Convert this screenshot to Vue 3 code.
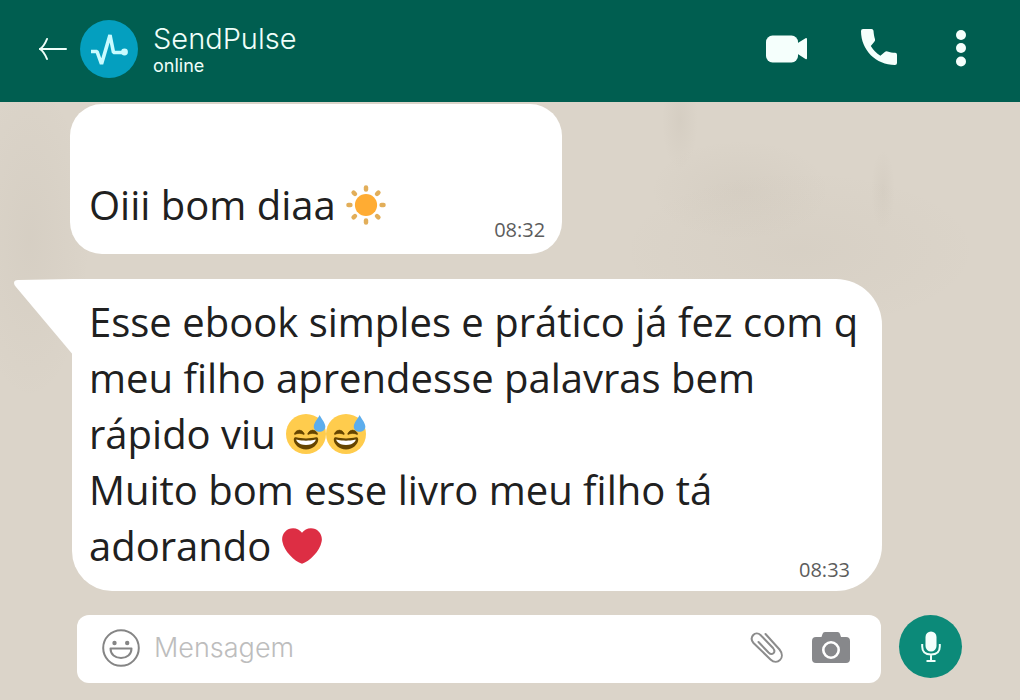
<script setup>
import { ref } from 'vue'

const draft = ref('')
const rays = [0, 45, 90, 135, 180, 225, 270, 315]
</script>

<template>
  <div class="chat">
    <header class="bar">
      <button class="icon-btn back" type="button" aria-label="Voltar">
        <svg width="28" height="24" viewBox="0 0 28 24" fill="none" stroke="#effffa" stroke-width="2" stroke-linecap="round">
          <path d="M27 12H1" /><path d="M8 2C6 7 4 10 1 12C4 14 6 17 8 22" />
        </svg>
      </button>
      <svg class="avatar" width="58" height="58" viewBox="0 0 58 58" aria-hidden="true">
        <circle cx="29" cy="29" r="29" fill="#049fbf" />
        <path d="M11 31.500H17L21.500 44L30 15L33.500 32.500H43" fill="none" stroke="#c9fbff" stroke-width="3.600" stroke-linejoin="bevel" />
        <circle cx="44.500" cy="32" r="3.400" fill="#c9fbff" />
      </svg>
      <div class="who">
        <h1>SendPulse</h1>
        <p>online</p>
      </div>
      <nav class="actions">
        <button class="icon-btn" type="button" aria-label="Chamada de vídeo">
          <svg width="42" height="28" viewBox="0 0 42 28" fill="#f5fffc">
            <rect x="0" y="0.500" width="32" height="27" rx="6.500" />
            <path d="M31 8.500L39.500 3.300Q41 2.500 41 4.500V23Q41 25 39.500 24L31 18.500Z" />
          </svg>
        </button>
        <button class="icon-btn" type="button" aria-label="Chamada de voz">
          <svg width="36" height="40" viewBox="0 0 36 40" fill="#f5fffc">
            <path d="M2 0H10.500Q12.300 0 12.500 1.800C12.700 5 13.200 7.500 14 10.200Q14.400 11.600 13.300 12.700L9.800 17C12.500 21.500 15.300 24.200 19.400 26.700L23.800 23Q25 22 26.500 22.500C29 23.300 31.300 23.700 34.200 23.800Q36 23.900 36 25.700V34Q36 36 34 36C15 36 0 21 0 2Q0 0 2 0Z" />
          </svg>
        </button>
        <button class="icon-btn more" type="button" aria-label="Mais opções">
          <svg width="10" height="38" viewBox="0 0 10 38" fill="#f5fffc">
            <circle cx="5" cy="5" r="5" /><circle cx="5" cy="18" r="5" /><circle cx="5" cy="31.500" r="5" />
          </svg>
        </button>
      </nav>
    </header>

    <main class="thread">
      <article class="bubble first">
        <p class="text">
          Oiii bom diaa
          <svg class="emoji" viewBox="0 0 36 36" role="img" aria-label="sol">
            <g stroke="#e2ae59" stroke-width="4" stroke-linecap="round">
              <path v-for="r in rays" :key="r" d="M18 2.200V4" :transform="`rotate(${r} 18 18)`" />
            </g>
            <circle cx="18" cy="18" r="10" fill="#ffac33" />
          </svg>
        </p>
        <time>08:32</time>
      </article>

      <article class="bubble second">
        <svg class="tail" width="60" height="78" viewBox="0 0 60 78" aria-hidden="true">
          <path d="M60 0L4 1Q0 1 0 4Q0 6 2 8L60 77Z" fill="#fff" />
        </svg>
        <div class="text">
          <p>
            Esse ebook simples e prático já fez com q meu filho aprendesse palavras bem rápido viu
            <span class="pair"><svg v-for="n in 2" :key="n" class="emoji" viewBox="0 0 36 36" role="img" aria-label="sorriso com suor">
              <circle cx="18" cy="18" r="18" fill="#ffcc4d" />
              <g fill="#664500">
                <path d="M28.457 17.797c-.06-.135-1.499-3.297-4.457-3.297-2.957 0-4.397 3.162-4.457 3.297-.092.207-.032.449.145.591.175.142.426.147.61.014.012-.009 1.262-.902 3.702-.902 2.426 0 3.674.881 3.702.901.088.066.194.099.298.099.11 0 .221-.037.312-.109.177-.142.238-.386.145-.594zm-12 0c-.06-.135-1.499-3.297-4.457-3.297-2.957 0-4.397 3.162-4.457 3.297-.092.207-.032.449.144.591.176.142.427.147.61.014.013-.009 1.262-.902 3.703-.902 2.426 0 3.674.881 3.702.901.088.066.194.099.298.099.11 0 .221-.037.312-.109.178-.142.237-.386.145-.594z" stroke="#664500" stroke-width=".5" />
                <path d="M18 22c-3.623 0-6.027-.422-9-1-.679-.131-2 0-2 2 0 4 4.595 9 11 9 6.404 0 11-5 11-9 0-2-1.321-2.132-2-2-2.973.578-5.377 1-9 1z" />
              </g>
              <path d="M9 23s3 1 9 1 9-1 9-1-1.344 5-9 5-9-5-9-5z" fill="#fff" />
              <path d="M30.300 .8C31 3.200 35.400 7.500 35.400 11.200C35.400 14.200 33 16 30.200 16C27.400 16 25 14.200 25 11.200C25 7.500 29.500 3.200 30.300 .8Z" fill="#5dadec" />
            </svg></span>
          </p>
          <p>
            Muito bom esse livro meu filho tá adorando
            <svg class="emoji" viewBox="0 0 36 36" role="img" aria-label="coração">
              <path fill="#dd2e44" d="M35.885 11.833c0-5.450-4.418-9.868-9.867-9.868-3.308 0-6.227 1.633-8.018 4.129-1.791-2.496-4.710-4.129-8.017-4.129-5.450 0-9.868 4.417-9.868 9.868 0 .772.098 1.520.266 2.241C1.751 22.587 11.216 31.568 18 34.034c6.783-2.466 16.249-11.447 17.617-19.959.170-.721.268-1.469.268-2.242z" />
            </svg>
          </p>
        </div>
        <time>08:33</time>
      </article>
    </main>

    <form class="composer" @submit.prevent>
      <div class="field">
        <button class="icon-btn" type="button" aria-label="Emojis">
          <svg width="38" height="38" viewBox="0 0 38 38" fill="none" stroke="#858585" stroke-width="2">
            <circle cx="19" cy="19" r="17.800" />
            <path d="M8.500 19.500H29.500C29.500 25.500 24.800 29 19 29S8.500 25.500 8.500 19.500Z" stroke-linejoin="round" />
            <circle cx="12.500" cy="14" r="2.200" fill="#858585" stroke="none" />
            <circle cx="25.200" cy="14" r="2.200" fill="#858585" stroke="none" />
          </svg>
        </button>
        <input v-model="draft" type="text" placeholder="Mensagem" aria-label="Mensagem" />
        <button class="icon-btn clip" type="button" aria-label="Anexar">
          <svg width="34" height="34" viewBox="0 0 34 34" fill="none" stroke="#8c8c8c" stroke-width="2" stroke-linecap="round">
            <path d="M15.500 3L29.500 18.500C36 26.500 27.500 35 20.500 28.500L3.500 12C-1.500 6 5.500 -.500 10.500 4L23 17C26.500 21.500 22 25 18.500 21.500L8.500 11" />
          </svg>
        </button>
        <button class="icon-btn" type="button" aria-label="Câmera">
          <svg width="38" height="32" viewBox="0 0 38 32">
            <path d="M4 5H9.500L10.500 2Q11 0 13 0H25.500Q27.500 0 28 2L29 5H34Q38 5 38 9V27Q38 31 34 31H4Q0 31 0 27V9Q0 5 4 5Z" fill="#87888b" />
            <circle cx="19" cy="18" r="7.700" fill="#87888b" stroke="#fff" stroke-width="2.600" />
          </svg>
        </button>
      </div>
      <button class="mic" type="button" aria-label="Gravar áudio">
        <svg width="20" height="32" viewBox="0 0 20 32" fill="none" stroke="#effffa" stroke-width="2">
          <rect x="4.500" y="0.500" width="11" height="20" rx="5.500" fill="#f5fffc" stroke="none" />
          <path d="M1.200 13V15.500C1.200 20.500 4.500 23.500 10 23.500S18.800 20.500 18.800 15.500V13M10 23.500V30M5.500 30H14.500" />
        </svg>
      </button>
    </form>
  </div>
</template>

<style scoped>
.chat {
  display: flex;
  flex-direction: column;
  min-height: 100vh;
  font-family: "Open Sans", "Noto Sans", sans-serif;
  color: #202020;
  background:
    radial-gradient(ellipse 90px 50px at 740px 190px, rgba(120, 108, 92, 0.05), transparent),
    radial-gradient(ellipse 18px 50px at 680px 120px, rgba(120, 108, 92, 0.06), transparent),
    radial-gradient(ellipse 12px 40px at 883px 190px, rgba(120, 108, 92, 0.05), transparent),
    radial-gradient(ellipse 180px 80px at 800px 250px, rgba(120, 108, 92, 0.04), transparent),
    radial-gradient(ellipse 60px 160px at 30px 240px, rgba(120, 108, 92, 0.05), transparent),
    #dbd4c9;
}

h1,
p {
  margin: 0;
  font-weight: 400;
}

svg {
  display: block;
}

.icon-btn {
  flex: none;
  padding: 0;
  border: 0;
  background: none;
  cursor: pointer;
}

.bar {
  display: flex;
  align-items: center;
  box-sizing: border-box;
  height: 102px;
  padding: 0 54px 4px 39px;
  background: #005e50;
  color: #effffa;
}

.avatar {
  flex: none;
  margin: 0 15px 0 13px;
}

.who {
  flex: 1;
  font-family: Inter, "Open Sans", sans-serif;
}

.who h1 {
  font-size: 29px;
  font-weight: 300;
  line-height: 34px;
}

.who p {
  font-size: 18px;
  line-height: 20px;
}

.actions {
  display: flex;
  align-items: center;
  gap: 53px;
}

.more {
  margin-left: 6px;
}

.thread {
  display: flex;
  flex: 1;
  flex-direction: column;
  align-items: flex-start;
  gap: 25px;
  padding: 2px 138px 24px 70px;
}

.bubble {
  background: #fff;
}

.text {
  font-size: 40px;
  line-height: 56px;
}

.emoji {
  display: inline-block;
  width: 40px;
  height: 40px;
  vertical-align: -5px;
}

.pair {
  white-space: nowrap;
}

time {
  font-size: 20px;
  line-height: 24px;
  color: #5c5c5c;
}

.first {
  display: flex;
  align-items: flex-end;
  gap: 108px;
  padding: 73px 17px 12px 19px;
  border-radius: 32px;
}

.first .text {
  padding-bottom: 9px;
}

.second {
  position: relative;
  display: grid;
  align-self: stretch;
  margin-left: 2px;
  border-radius: 0 46px 46px 40px;
}

.second .text,
.second time {
  grid-area: 1 / 1;
}

.second .text {
  padding: 15px 16px 17px 17px;
}

.second time {
  place-self: end;
  margin: 0 32px 9px 0;
}

.tail {
  position: absolute;
  top: 0;
  left: -58px;
}

.composer {
  display: flex;
  align-items: flex-start;
  gap: 18px;
  padding: 0 58px 17px 77px;
}

.field {
  display: flex;
  flex: 1;
  align-items: center;
  box-sizing: border-box;
  min-width: 0;
  height: 68px;
  padding: 0 31px 2px 25px;
  border-radius: 12px;
  background: #fff;
}

.field input {
  flex: 1;
  min-width: 0;
  padding: 0 14px;
  border: 0;
  outline: 0;
  background: none;
  font-family: Inter, "Open Sans", sans-serif;
  font-size: 27px;
  font-weight: 300;
  line-height: 36px;
  color: #202020;
}

.field input::placeholder {
  color: #bdbdbd;
  opacity: 1;
}

.clip {
  margin-right: 28px;
}

.mic {
  display: grid;
  flex: none;
  place-items: center;
  width: 63px;
  height: 63px;
  padding: 0;
  border: 0;
  border-radius: 50%;
  background: #0c8a79;
  cursor: pointer;
}
</style>

<style>
body {
  margin: 0;
}
</style>
